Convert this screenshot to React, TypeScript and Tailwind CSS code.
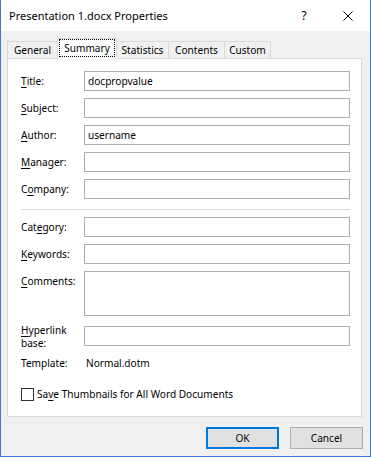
import React from "react"

function Key({ children }: { children: React.ReactNode }) {
  return <span className="underline underline-offset-[2px] decoration-[1px]">{children}</span>
}

function Field({ label, value, tall }: { label: React.ReactNode; value?: string; tall?: boolean }) {
  return (
    <div className="flex items-start">
      <div className="w-[63px] h-[20px] flex items-center shrink-0">{label}</div>
      <div
        className={
          "w-[266px] border border-[#abadb3] bg-white flex px-[3px] " +
          (tall ? "h-[45px] items-start pt-[2px]" : "h-[20px] items-center")
        }
      >
        {value}
      </div>
    </div>
  )
}

const tabs = [
  { name: "General", w: "w-[51px]" },
  { name: "Summary", w: "w-[60px]", active: true },
  { name: "Statistics", w: "w-[53px]" },
  { name: "Contents", w: "w-[57px]" },
  { name: "Custom", w: "w-[47px]" },
]

export default function App() {
  return (
    <div className="w-[371px] h-[457px] flex flex-col border-x border-b border-[#3a7bd5] bg-[#f0f0f0] text-[10.1px] text-black font-['Noto_Sans',sans-serif] leading-none">
      {/* Title bar */}
      <div className="h-[31px] shrink-0 bg-white flex items-center pl-[8px]">
        <span className="flex-1 text-[11px]">Presentation 1.docx Properties</span>
        <span className="w-[44px] flex justify-center text-[12px]">?</span>
        <span className="w-[44px] flex justify-center">
          <svg width="10" height="10" viewBox="0 0 10 10">
            <path d="M0.5 0.5 L9.5 9.5 M9.5 0.5 L0.5 9.5" stroke="#000" strokeWidth="1" />
          </svg>
        </span>
      </div>

      {/* Body */}
      <div className="flex-1 flex flex-col pl-[6px] pt-[7px]">
        <div className="relative z-10 flex items-end h-[21px] -mb-px">
          {tabs.map((t, i) =>
            t.active ? (
              <div
                key={t.name}
                className={`${t.w} h-[21px] -ml-px relative z-10 bg-white border-x border-t border-[#d9d9d9] flex items-start justify-center pt-[1px]`}
              >
                <span className="outline outline-1 outline-dotted outline-black px-[4px] h-[16px] flex items-center">
                  {t.name}
                </span>
              </div>
            ) : (
              <div
                key={t.name}
                className={`${t.w} h-[18px] ${i > 0 ? "-ml-px" : ""} border border-[#d9d9d9] bg-[#f0f0f0] flex items-center justify-center`}
              >
                {t.name}
              </div>
            )
          )}
        </div>

        <div className="w-[355px] h-[359px] border border-[#d9d9d9] bg-white pt-[12px] pl-[13px] pr-[11px] flex flex-col">
          <div className="flex flex-col gap-[7px]">
            <Field label={<span><Key>T</Key>itle:</span>} value="docpropvalue" />
            <Field label={<span><Key>S</Key>ubject:</span>} />
            <Field label={<span><Key>A</Key>uthor:</span>} value="username" />
            <Field label={<span><Key>M</Key>anager:</span>} />
            <Field label={<span>C<Key>o</Key>mpany:</span>} />
          </div>

          <div className="h-px bg-[#dadada] mt-[10px] mb-[7px] w-[329px]" />

          <div className="flex flex-col gap-[7px]">
            <Field label={<span>Cat<Key>e</Key>gory:</span>} />
            <Field label={<span><Key>K</Key>eywords:</span>} />
            <Field label={<span><Key>C</Key>omments:</span>} tall />
          </div>

          <div className="flex items-start h-[20px] mt-[10px]">
            <div className="w-[63px] h-[20px] shrink-0">
              <div className="-mt-[2px] leading-[13px]">
                <Key>H</Key>yperlink
                <br />
                base:
              </div>
            </div>
            <div className="w-[266px] h-[20px] border border-[#abadb3] bg-white" />
          </div>

          <div className="flex items-center h-[20px] mt-[7px]">
            <div className="w-[63px] shrink-0">Template:</div>
            <div className="pl-[2px]">Normal.dotm</div>
          </div>

          <div className="flex items-center mt-[15px] gap-[3px]">
            <div className="w-[13px] h-[13px] border border-[#333333] bg-white shrink-0" />
            <span>
              Sa<Key>v</Key>e Thumbnails for All Word Documents
            </span>
          </div>
        </div>

        <div className="flex justify-end gap-[11px] pr-[7px] mt-[10px]">
          <button className="w-[73px] h-[22px] border-2 border-[#0078d7] bg-[#e1e1e1] flex items-center justify-center">
            OK
          </button>
          <button className="w-[73px] h-[22px] border border-[#adadad] bg-[#e1e1e1] flex items-center justify-center">
            Cancel
          </button>
        </div>
      </div>
    </div>
  )
}
